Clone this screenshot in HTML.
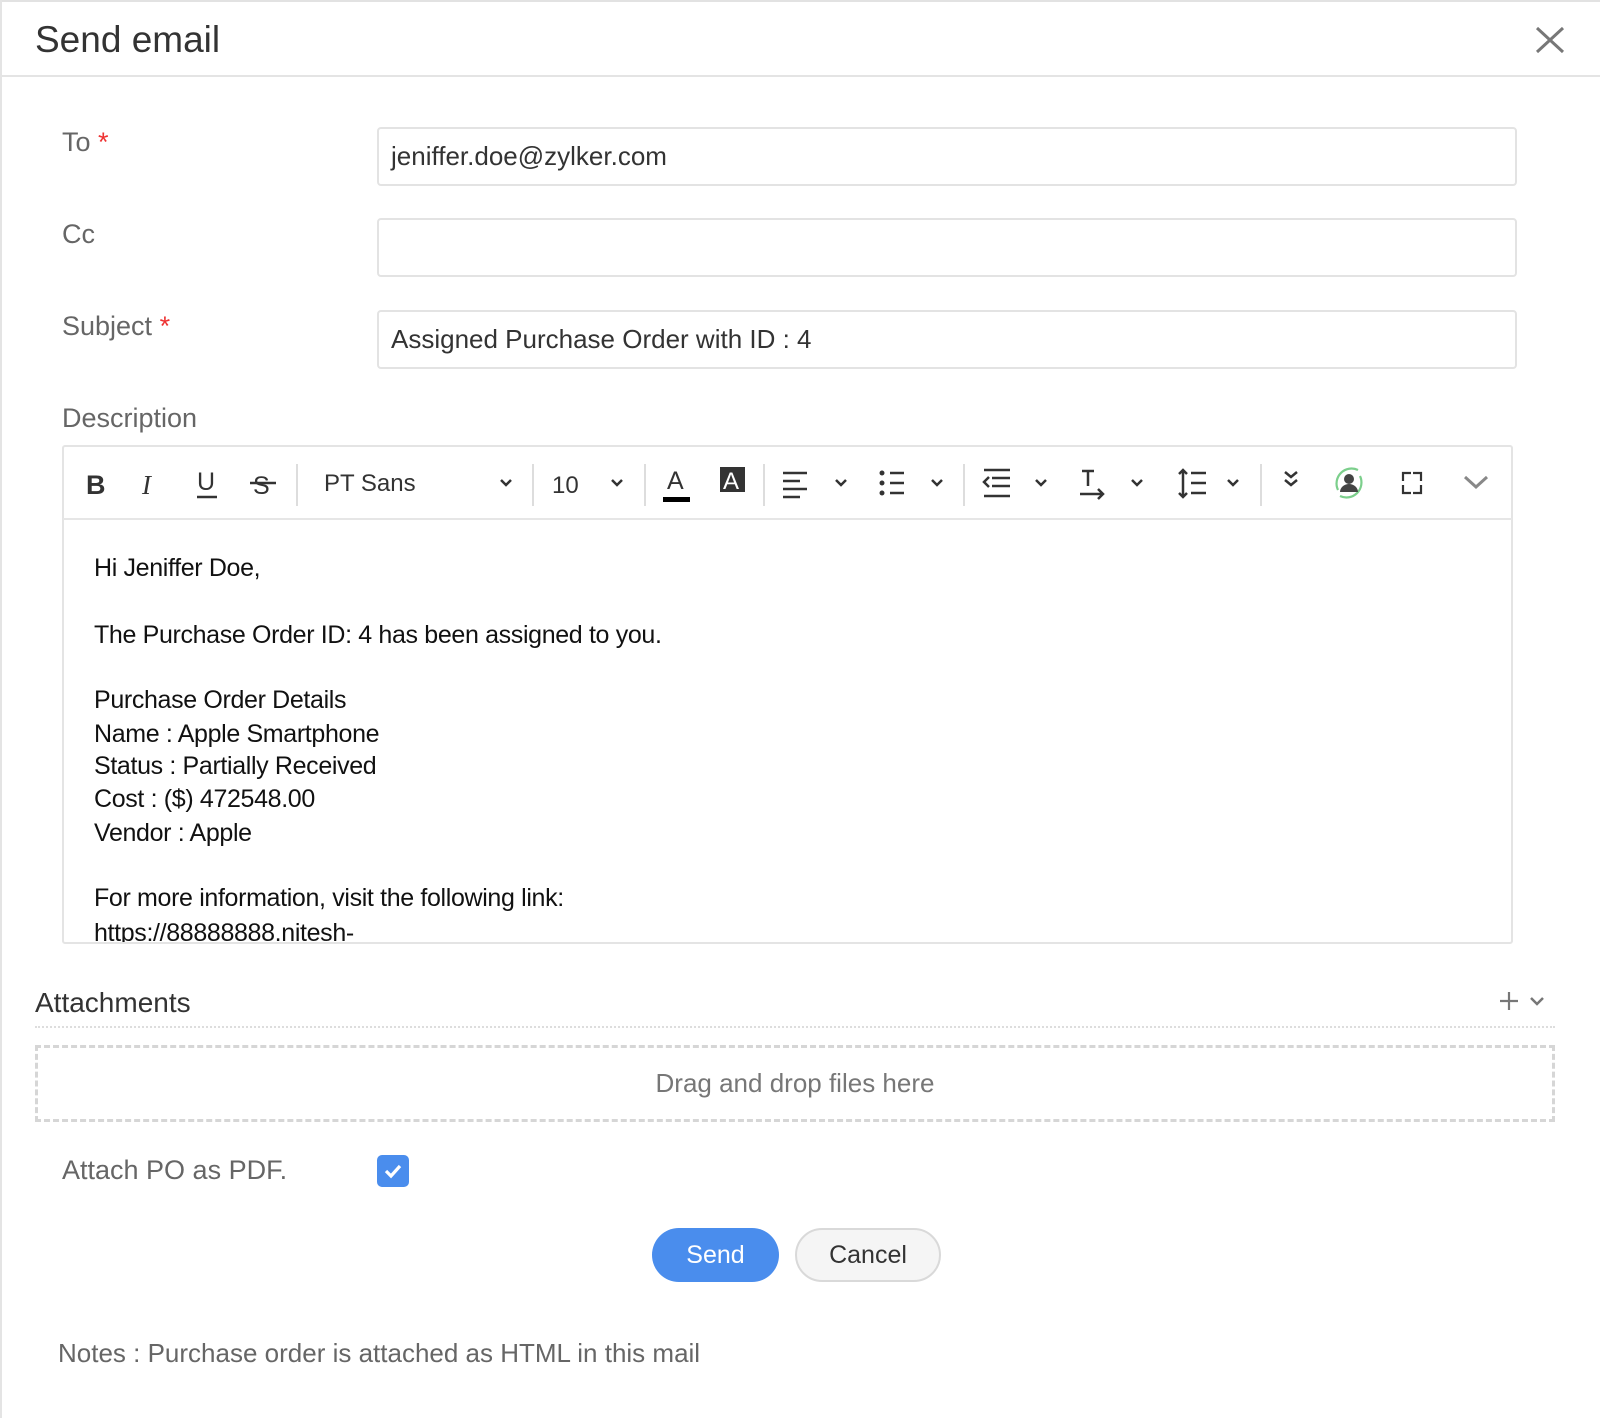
<!DOCTYPE html>
<html><head><meta charset="utf-8">
<style>
*{box-sizing:border-box;margin:0;padding:0}
body{width:1600px;height:1418px;background:#fff;font-family:"Liberation Sans",sans-serif;color:#555;position:relative;overflow:hidden}
.a{position:absolute}
.lbl{font-size:27px;color:#666;line-height:1}
.inp{position:absolute;left:377px;width:1140px;height:59px;border:2px solid #e3e3e3;border-radius:4px;font-size:26px;color:#333;padding-left:12px;line-height:55px}
.req{color:#e33;}
.body{position:absolute;left:94px;font-size:25px;color:#111;line-height:1;letter-spacing:-0.35px}
</style></head><body>
<div class="a" style="left:0;top:0;width:1600px;height:2px;background:#e2e2e2"></div>
<div class="a" style="left:0;top:0;width:2px;height:1418px;background:#e4e4e4"></div>
<div class="a" style="left:35px;top:19px;font-size:37px;color:#333">Send email</div>
<svg class="a" style="left:1535px;top:26px" width="30" height="28"><path d="M2 2L28 26M28 2L2 26" stroke="#777" stroke-width="3"/></svg>
<div class="a" style="left:0;top:75px;width:1600px;height:2px;background:#e4e4e4"></div>

<div class="a lbl" style="left:62px;top:129px">To <span class="req">*</span></div>
<div class="inp" style="top:127px">jeniffer.doe@zylker.com</div>
<div class="a lbl" style="left:62px;top:221px">Cc</div>
<div class="inp" style="top:218px"></div>
<div class="a lbl" style="left:62px;top:313px">Subject <span class="req">*</span></div>
<div class="inp" style="top:310px">Assigned Purchase Order with ID : 4</div>
<div class="a lbl" style="left:62px;top:405px">Description</div>

<div class="a" style="left:62px;top:445px;width:1451px;height:499px;border:2px solid #e4e4e4;border-radius:3px"></div>
<div class="a" style="left:63px;top:518px;width:1449px;height:2px;background:#e6e6e6"></div>
<svg class="a" style="left:0;top:450px" width="1600" height="66" font-family="Liberation Sans" fill="#333">
<g stroke="#ddd" stroke-width="2"><path d="M297 14V56M533 14V56M645 14V56M764 14V56M964 14V56M1261 14V56"/></g>
<text x="86" y="44" font-size="27" font-weight="bold">B</text>
<text x="142" y="44" font-size="27" font-style="italic" font-family="Liberation Serif">I</text>
<text x="197" y="40" font-size="25">U</text><path d="M197 47H217" stroke="#333" stroke-width="2.5"/>
<text x="253" y="44" font-size="25">S</text><path d="M250 33H276" stroke="#333" stroke-width="2.5"/>
<text x="324" y="41" font-size="24">PT Sans</text>
<text x="552" y="43" font-size="24">10</text>
<text x="667" y="39" font-size="25">A</text><rect x="663" y="47" width="27" height="5" fill="#000"/>
<rect x="720" y="17" width="25" height="25" fill="#333"/><text x="723" y="39" font-size="24" fill="#fff">A</text>
<g stroke="#333" stroke-width="2.5" fill="none">
<path d="M501 30l5 5 5-5M612 30l5 5 5-5M836 30l5 5 5-5M932 30l5 5 5-5M1036 30l5 5 5-5M1132 30l5 5 5-5M1228 30l5 5 5-5"/>
<path d="M783 23H807M783 31H800M783 39H807M783 47H800"/>
<path d="M890 23H904M890 33H904M890 43H904"/>
<path d="M984 20H1010M992 28H1010M992 36H1010M984 46H1010M989 27l-5 5 5 5"/>
<path d="M1082 21H1094M1088 21V36M1080 44H1103M1098 39l5 5-5 5"/>
<path d="M1191 23H1206M1191 33H1206M1191 43H1206M1183 20V47M1179 24l4-4 4 4M1179 43l4 4 4-4"/>
<path d="M1285 22l6 5 6-5M1285 30l6 5 6-5"/>
<path d="M1403 31V23H1411M1413 23H1421V31M1421 35V43H1413M1411 43H1403V35" stroke-width="2.2"/>
</g>
<g fill="#333"><circle cx="882" cy="23" r="2.5"/><circle cx="882" cy="33" r="2.5"/><circle cx="882" cy="43" r="2.5"/></g>
<g fill="none" stroke="#7ccf8c" stroke-width="2.2"><path d="M1338 40a15 15 0 0 1 20-20M1360 26a15 15 0 0 1-20 20"/></g>
<circle cx="1349" cy="29" r="5" fill="#444"/><path d="M1340 42a9 8 0 0 1 18 0z" fill="#444"/>
<path d="M1465 27l11 10 11-10" stroke="#888" stroke-width="3" fill="none"/>
</svg>

<div class="body" style="top:556px">Hi Jeniffer Doe,</div>
<div class="body" style="top:623px">The Purchase Order ID: 4 has been assigned to you.</div>
<div class="body" style="top:688px">Purchase Order Details</div>
<div class="body" style="top:722px">Name : Apple Smartphone</div>
<div class="body" style="top:754px">Status : Partially Received</div>
<div class="body" style="top:787px">Cost : ($) 472548.00</div>
<div class="body" style="top:821px">Vendor : Apple</div>
<div class="body" style="top:886px">For more information, visit the following link:</div>
<div class="a" style="left:63px;top:919px;width:1449px;height:23px;overflow:hidden"><div style="position:absolute;left:31px;top:0;font-size:25px;color:#111;letter-spacing:-0.35px">https://88888888.nitesh-</div></div>

<div class="a" style="left:35px;top:987px;font-size:28px;color:#333">Attachments</div>
<svg class="a" style="left:1498px;top:990px" width="50" height="22"><path d="M2 11H20M11 2V20" stroke="#777" stroke-width="2.2"/><path d="M33 8l6 6 6-6" stroke="#777" stroke-width="2.5" fill="none"/></svg>
<div class="a" style="left:35px;top:1026px;width:1520px;border-top:2px dotted #ddd"></div>
<div class="a" style="left:35px;top:1045px;width:1520px;height:77px;border:3px dashed #d6d6d6;text-align:center;line-height:71px;font-size:26px;color:#777">Drag and drop files here</div>

<div class="a lbl" style="left:62px;top:1157px">Attach PO as PDF.</div>
<div class="a" style="left:377px;top:1155px;width:32px;height:32px;border-radius:5px;background:#4a8ded"></div>
<svg class="a" style="left:377px;top:1155px" width="32" height="32"><path d="M9 16l5 5 9-10" stroke="#fff" stroke-width="3.2" fill="none"/></svg>

<div class="a" style="left:652px;top:1228px;width:127px;height:54px;border-radius:27px;background:#4a8ded;color:#fff;font-size:25px;text-align:center;line-height:54px">Send</div>
<div class="a" style="left:795px;top:1228px;width:146px;height:54px;border-radius:27px;background:#f5f5f5;border:2px solid #d9d9d9;color:#333;font-size:25px;text-align:center;line-height:50px">Cancel</div>

<div class="a" style="left:58px;top:1338px;font-size:26px;color:#666">Notes : Purchase order is attached as HTML in this mail</div>
</body></html>
